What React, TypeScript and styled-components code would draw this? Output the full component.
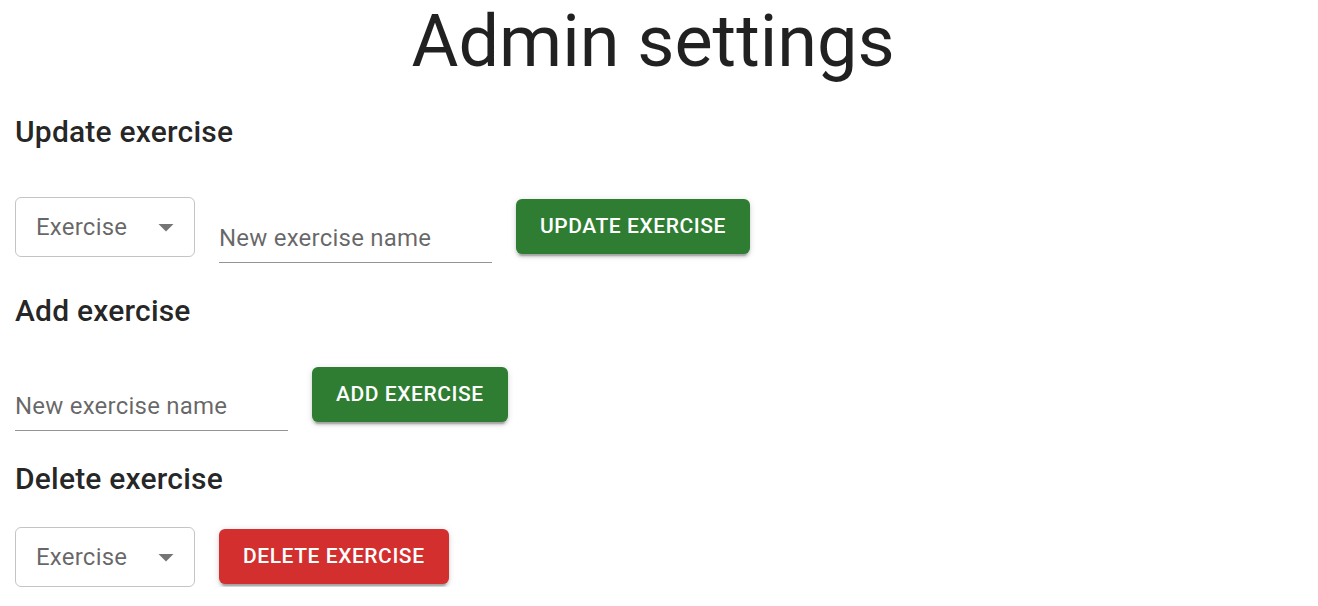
import React from 'react';
import styled, { createGlobalStyle } from 'styled-components';

const GlobalStyle = createGlobalStyle`
  html, body {
    margin: 0;
    padding: 0;
    background: #fff;
  }

  body {
    font-family: Roboto, "Helvetica Neue", Arial, sans-serif;
    color: rgba(0, 0, 0, 0.87);
  }
`;

const Page = styled.div`
  padding: 0 15px;
`;

const Title = styled.h1`
  margin: 0;
  padding-right: 12px;
  font-size: 72px;
  font-weight: 400;
  line-height: 84px;
  text-align: center;
  color: rgba(0, 0, 0, 0.87);
`;

const SectionTitle = styled.h2`
  margin: 24px 0 0;
  font-size: 30px;
  font-weight: 500;
  line-height: 48px;
  letter-spacing: 0.2px;
  color: rgba(0, 0, 0, 0.87);
`;

const Row = styled.div<{ $top?: number }>`
  display: flex;
  align-items: center;
  gap: 24px;
  margin-top: ${(p) => p.$top ?? 24}px;
`;

const SelectBox = styled.div`
  box-sizing: border-box;
  width: 180px;
  height: 60px;
  display: flex;
  align-items: center;
  justify-content: space-between;
  padding: 1px 10px 0 20px;
  border: 1px solid rgba(0, 0, 0, 0.23);
  border-radius: 6px;
  font-size: 24px;
  letter-spacing: 0.225px;
  color: rgba(0, 0, 0, 0.6);
  cursor: pointer;

  svg {
    flex: none;
    margin-top: -1px;
    fill: rgba(0, 0, 0, 0.54);
  }
`;

const Field = styled.label`
  display: flex;
  flex-direction: column;
  width: 273px;
  height: 72px;
  padding-top: 24px;
  box-sizing: border-box;
`;

const FieldInput = styled.input`
  box-sizing: border-box;
  width: 100%;
  height: 48px;
  margin: 0;
  padding: 7px 0 6.5px;
  border: none;
  border-bottom: 1px solid rgba(0, 0, 0, 0.42);
  outline: none;
  background: transparent;
  font-family: Roboto, "Helvetica Neue", Arial, sans-serif;
  font-size: 24px;
  line-height: 34.5px;
  letter-spacing: 0.225px;
  color: rgba(0, 0, 0, 0.87);

  &::placeholder {
    color: rgba(0, 0, 0, 0.6);
    opacity: 1;
  }
`;

const ActionButton = styled.button<{ $tone: 'success' | 'error' }>`
  height: 54.75px;
  padding: 9px 24px;
  border: none;
  border-radius: 6px;
  background: ${(p) => (p.$tone === 'error' ? '#d32f2f' : '#2e7d32')};
  color: #fff;
  font-family: Roboto, "Helvetica Neue", Arial, sans-serif;
  font-size: 21px;
  font-weight: 500;
  line-height: 36.75px;
  letter-spacing: 0.55px;
  text-transform: uppercase;
  box-shadow: 0 4.5px 1.5px -3px rgba(0, 0, 0, 0.2), 0 3px 3px 0 rgba(0, 0, 0, 0.14),
    0 1.5px 7.5px 0 rgba(0, 0, 0, 0.12);
  cursor: pointer;
`;

const ArrowDown = () => (
  <svg width="36" height="36" viewBox="0 0 24 24" aria-hidden="true">
    <path d="M7 10l5 5 5-5z" />
  </svg>
);

const ExerciseSelect = () => (
  <SelectBox role="button">
    <span>Exercise</span>
    <ArrowDown />
  </SelectBox>
);

const NameField = () => (
  <Field>
    <FieldInput placeholder="New exercise name" />
  </Field>
);

export default function App() {
  return (
    <Page>
      <GlobalStyle />
      <Title>Admin settings</Title>

      <SectionTitle>Update exercise</SectionTitle>
      <Row $top={34.5}>
        <ExerciseSelect />
        <NameField />
        <ActionButton $tone="success">Update exercise</ActionButton>
      </Row>

      <SectionTitle>Add exercise</SectionTitle>
      <Row>
        <NameField />
        <ActionButton $tone="success">Add exercise</ActionButton>
      </Row>

      <SectionTitle>Delete exercise</SectionTitle>
      <Row>
        <ExerciseSelect />
        <ActionButton $tone="error">Delete exercise</ActionButton>
      </Row>
    </Page>
  );
}
